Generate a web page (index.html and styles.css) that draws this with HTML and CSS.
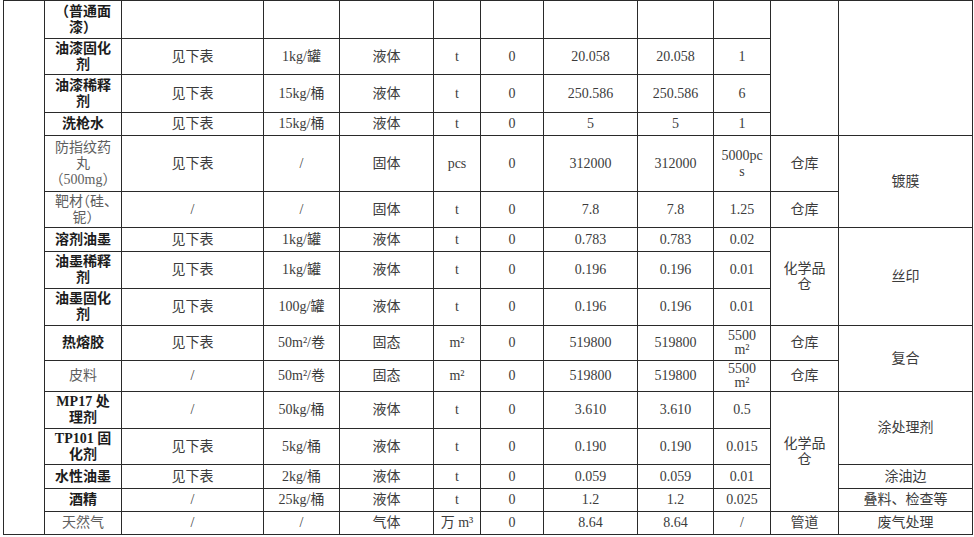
FILE: index.html
```html
<!DOCTYPE html>
<html lang="zh-CN">
<head>
<meta charset="utf-8">
<title>原辅材料表</title>
<link rel="stylesheet" href="styles.css">
</head>
<body>
<table class="sheet">
  <colgroup>
    <col class="c1"><col class="c2"><col class="c3"><col class="c4"><col class="c5"><col class="c6">
    <col class="c7"><col class="c8"><col class="c9"><col class="c10"><col class="c11"><col class="c12">
  </colgroup>
  <tbody>
    <tr class="h38">
      <td rowspan="16"></td>
      <td class="nm">（普通面漆）</td>
      <td></td><td></td><td></td><td></td><td></td><td></td><td></td><td></td>
      <td rowspan="4"></td>
      <td rowspan="4"></td>
    </tr>
    <tr class="h36">
      <td class="nm">油漆固化剂</td><td>见下表</td><td>1kg/罐</td><td>液体</td><td>t</td><td>0</td><td>20.058</td><td>20.058</td><td>1</td>
    </tr>
    <tr class="h38">
      <td class="nm">油漆稀释剂</td><td>见下表</td><td>15kg/桶</td><td>液体</td><td>t</td><td>0</td><td>250.586</td><td>250.586</td><td>6</td>
    </tr>
    <tr class="h23">
      <td class="nm">洗枪水</td><td>见下表</td><td>15kg/桶</td><td>液体</td><td>t</td><td>0</td><td>5</td><td>5</td><td>1</td>
    </tr>
    <tr class="h56">
      <td class="lt halt">防指纹药丸（500mg）</td><td>见下表</td><td>/</td><td>固体</td><td>pcs</td><td>0</td><td>312000</td><td>312000</td><td>5000pc<br>s</td><td>仓库</td>
      <td rowspan="2">镀膜</td>
    </tr>
    <tr class="h36">
      <td class="lt halt">靶材（硅、铌）</td><td>/</td><td>/</td><td>固体</td><td>t</td><td>0</td><td>7.8</td><td>7.8</td><td>1.25</td><td>仓库</td>
    </tr>
    <tr class="h24">
      <td class="nm">溶剂油墨</td><td>见下表</td><td>1kg/罐</td><td>液体</td><td>t</td><td>0</td><td>0.783</td><td>0.783</td><td>0.02</td>
      <td rowspan="3">化学品仓</td>
      <td rowspan="3">丝印</td>
    </tr>
    <tr class="h37">
      <td class="nm">油墨稀释剂</td><td>见下表</td><td>1kg/罐</td><td>液体</td><td>t</td><td>0</td><td>0.196</td><td>0.196</td><td>0.01</td>
    </tr>
    <tr class="h37">
      <td class="nm">油墨固化剂</td><td>见下表</td><td>100g/罐</td><td>液体</td><td>t</td><td>0</td><td>0.196</td><td>0.196</td><td>0.01</td>
    </tr>
    <tr class="h35">
      <td class="nm">热熔胶</td><td>见下表</td><td>50m²/卷</td><td>固态</td><td>m²</td><td>0</td><td>519800</td><td>519800</td><td class="tight">5500<br>m²</td><td>仓库</td>
      <td rowspan="2">复合</td>
    </tr>
    <tr class="h31">
      <td class="lt">皮料</td><td>/</td><td>50m²/卷</td><td>固态</td><td>m²</td><td>0</td><td>519800</td><td>519800</td><td class="tight">5500<br>m²</td><td>仓库</td>
    </tr>
    <tr class="h37">
      <td class="nm">MP17 处理剂</td><td>/</td><td>50kg/桶</td><td>液体</td><td>t</td><td>0</td><td>3.610</td><td>3.610</td><td>0.5</td>
      <td rowspan="4">化学品仓</td>
      <td rowspan="2">涂处理剂</td>
    </tr>
    <tr class="h36">
      <td class="nm">TP101 固化剂</td><td>见下表</td><td>5kg/桶</td><td>液体</td><td>t</td><td>0</td><td>0.190</td><td>0.190</td><td>0.015</td>
    </tr>
    <tr class="h24">
      <td class="nm">水性油墨</td><td>见下表</td><td>2kg/桶</td><td>液体</td><td>t</td><td>0</td><td>0.059</td><td>0.059</td><td>0.01</td>
      <td>涂油边</td>
    </tr>
    <tr class="h23">
      <td class="nm">酒精</td><td>/</td><td>25kg/桶</td><td>液体</td><td>t</td><td>0</td><td>1.2</td><td>1.2</td><td>0.025</td>
      <td>叠料、检查等</td>
    </tr>
    <tr class="h23">
      <td class="lt">天然气</td><td>/</td><td>/</td><td>气体</td><td>万 m³</td><td>0</td><td>8.64</td><td>8.64</td><td>/</td><td>管道</td><td>废气处理</td>
    </tr>
  </tbody>
</table>
</body>
</html>
```

FILE: styles.css
```css
html, body {
  margin: 0;
  background: #ffffff;
}

body {
  padding: 0 0 0 3px;
}

.sheet {
  border-collapse: collapse;
  table-layout: fixed;
  width: 969px;
  font-family: "Liberation Serif", "Noto Sans CJK SC", serif;
  font-size: 14px;
  color: #3c3c3c;
}

.c1 { width: 41px; }
.c2 { width: 77px; }
.c3 { width: 142px; }
.c4 { width: 76px; }
.c5 { width: 94px; }
.c6 { width: 47px; }
.c7 { width: 63px; }
.c8 { width: 94px; }
.c9 { width: 76px; }
.c10 { width: 57px; }
.c11 { width: 68px; }
.c12 { width: 134px; }

.sheet td {
  border: 1px solid #2a2a2a;
  padding: 0 6px;
  text-align: center;
  vertical-align: middle;
  line-height: 16px;
  overflow: hidden;
}

.sheet td.nm {
  font-weight: 700;
  color: #1c1c1c;
}

.sheet td.lt {
  color: #5e5e5e;
}

.sheet td.halt {
  font-feature-settings: "halt" 1;
}

.sheet td.tight {
  line-height: 14px;
}

.h23 { height: 23px; }
.h24 { height: 24px; }
.h31 { height: 31px; }
.h35 { height: 35px; }
.h36 { height: 36px; }
.h37 { height: 37px; }
.h38 { height: 38px; }
.h56 { height: 56px; }
```
